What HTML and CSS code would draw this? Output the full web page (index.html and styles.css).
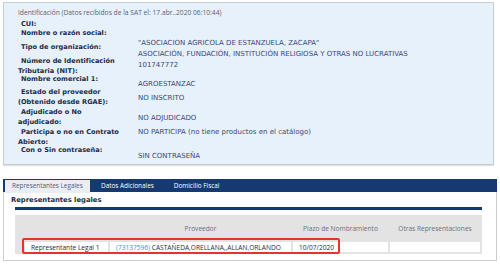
FILE: index.html
```html
<!DOCTYPE html>
<html lang="es">
<head>
    <meta charset="UTF-8">
    <meta name="viewport" content="width=device-width, initial-scale=1.0">
    <title>Proveedor</title>
    <link rel="stylesheet" href="styles.css">
</head>
<body>

    <section class="ident">
        <p class="ident-title">Identificación (Datos recibidos de la SAT el: 17.abr..2020 06:10:44)</p>

        <div class="field h9">
            <div class="label">CUI:</div>
            <div class="value"></div>
        </div>
        <div class="field h14">
            <div class="label">Nombre o razón social:</div>
            <div class="value off10">"ASOCIACION AGRICOLA DE ESTANZUELA, ZACAPA"</div>
        </div>
        <div class="field h14">
            <div class="label">Tipo de organización:</div>
            <div class="value off7">ASOCIACIÓN, FUNDACIÓN, INSTITUCIÓN RELIGIOSA Y OTRAS NO LUCRATIVAS</div>
        </div>
        <div class="field h18">
            <div class="label">Número de Identificación<br>Tributaria (NIT):</div>
            <div class="value off4">101747772</div>
        </div>
        <div class="field h13">
            <div class="label">Nombre comercial 1:</div>
            <div class="value off5">AGROESTANZAC</div>
        </div>
        <div class="field h20">
            <div class="label">Estado del proveedor<br>(Obtenido desde RGAE):</div>
            <div class="value off6">NO INSCRITO</div>
        </div>
        <div class="field h20">
            <div class="label">Adjudicado o No<br>adjudicado:</div>
            <div class="value off6">NO ADJUDICADO</div>
        </div>
        <div class="field h18">
            <div class="label">Participa o no en Contrato<br>Abierto:</div>
            <div class="value">NO PARTICIPA (no tiene productos en el catálogo)</div>
        </div>
        <div class="field h14">
            <div class="label">Con o Sin contraseña:</div>
            <div class="value off6">SIN CONTRASEÑA</div>
        </div>
    </section>

    <section class="tabs">
        <nav class="tab-bar">
            <a href="#" class="tab active">Representantes Legales</a>
            <a href="#" class="tab">Datos Adicionales</a>
            <a href="#" class="tab">Domicilio Fiscal</a>
        </nav>

        <div class="tab-panel">
            <h3 class="panel-title">Representantes legales</h3>
            <div class="panel-rule"></div>

            <div class="rep-table">
                <table>
                    <thead>
                        <tr>
                            <th class="col-type"></th>
                            <th class="col-prov">Proveedor</th>
                            <th class="col-plazo">Plazo de Nombramiento</th>
                            <th class="col-otras">Otras Representaciones</th>
                        </tr>
                    </thead>
                    <tbody>
                        <tr>
                            <td>Representante Legal 1</td>
                            <td><a href="#" class="nit">(73137596)</a> CASTAÑEDA,ORELLANA,,ALLAN,ORLANDO</td>
                            <td>10/07/2020</td>
                            <td></td>
                        </tr>
                    </tbody>
                </table>
                <div class="highlight"></div>
            </div>
        </div>
    </section>

</body>
</html>
```

FILE: styles.css
```css
body {
    margin: 0;
    padding: 2px 3px 0 3px;
    background-color: #ffffff;
    font-family: 'DejaVu Sans', Verdana, sans-serif;
}

/* identificacion */

.ident {
    width: 475px;
    background-color: #e6f1fc;
    border: 1px solid #c9cdd2;
    box-shadow: 0 1px 1px rgba(0, 0, 0, 0.12);
    padding: 5px 0 5px 14px;
}

.ident-title {
    margin: 0 0 1px 0;
    font-family: 'Open Sans', sans-serif;
    font-size: 6.7px;
    line-height: 10px;
    color: #5b6272;
}

.field {
    display: flex;
}

.h9 { height: 9px; }
.h13 { height: 13px; }
.h14 { height: 14px; }
.h18 { height: 18px; }
.h20 { height: 20px; }

.label {
    width: 120px;
    font-weight: bold;
    font-size: 6.6px;
    line-height: 10px;
    color: #1e2b48;
    text-indent: 3px;
}

.value {
    font-size: 7px;
    line-height: 10px;
    color: #3b4778;
    white-space: nowrap;
}

.off4 { padding-top: 4px; }
.off5 { padding-top: 5px; }
.off6 { padding-top: 6px; }
.off7 { padding-top: 7px; }
.off10 { padding-top: 10px; }

/* pestañas */

.tabs {
    margin-top: 14px;
    width: 494px;
}

.tab-bar {
    display: flex;
    height: 13px;
    background-color: #153a72;
    padding-left: 2px;
}

.tab {
    font-family: 'Open Sans', sans-serif;
    font-size: 6.4px;
    line-height: 13px;
    color: #ffffff;
    text-decoration: none;
    white-space: nowrap;
    padding: 0 10px;
}

.tab.active {
    margin-top: 1px;
    height: 13px;
    width: 71px;
    background-color: #e9eef4;
    color: #4d5d7c;
    padding: 0 7px 0 7px;
    margin-right: 1px;
    line-height: 12px;
}

.tab-panel {
    border: 1px solid #cdcdcd;
    border-top: none;
    height: 68px;
    padding: 0 14px 0 7px;
}

.panel-title {
    margin: 0;
    padding-top: 3px;
    font-size: 6.8px;
    line-height: 10px;
    color: #1e2b48;
}

.panel-rule {
    height: 3px;
    margin: 2px 0 5px 4px;
    background-color: #153a72;
}

.rep-table {
    position: relative;
    margin-left: 4px;
    background-color: #e3e3e3;
    padding: 0 0 2px 8px;
}

.rep-table table {
    width: 100%;
    table-layout: fixed;
    border-collapse: separate;
    border-spacing: 2px 0;
    font-family: 'Open Sans', sans-serif;
    font-size: 6.6px;
    color: #1e2b48;
}

.rep-table th {
    height: 27px;
    font-weight: normal;
    color: #6b7080;
    text-align: center;
    padding: 0 6px;
}

.rep-table td {
    background-color: #ffffff;
    height: 10px;
    padding: 0 6px;
    white-space: nowrap;
    overflow: hidden;
}

.col-type { width: 71px; }
.col-prov { width: 169px; }
.col-plazo { width: 83px; }

.nit {
    color: #3b8fd9;
    text-decoration: none;
}

.highlight {
    position: absolute;
    left: 7px;
    top: 23px;
    width: 314px;
    height: 12px;
    border: 2px solid #e8322b;
    border-radius: 2px;
}
```
